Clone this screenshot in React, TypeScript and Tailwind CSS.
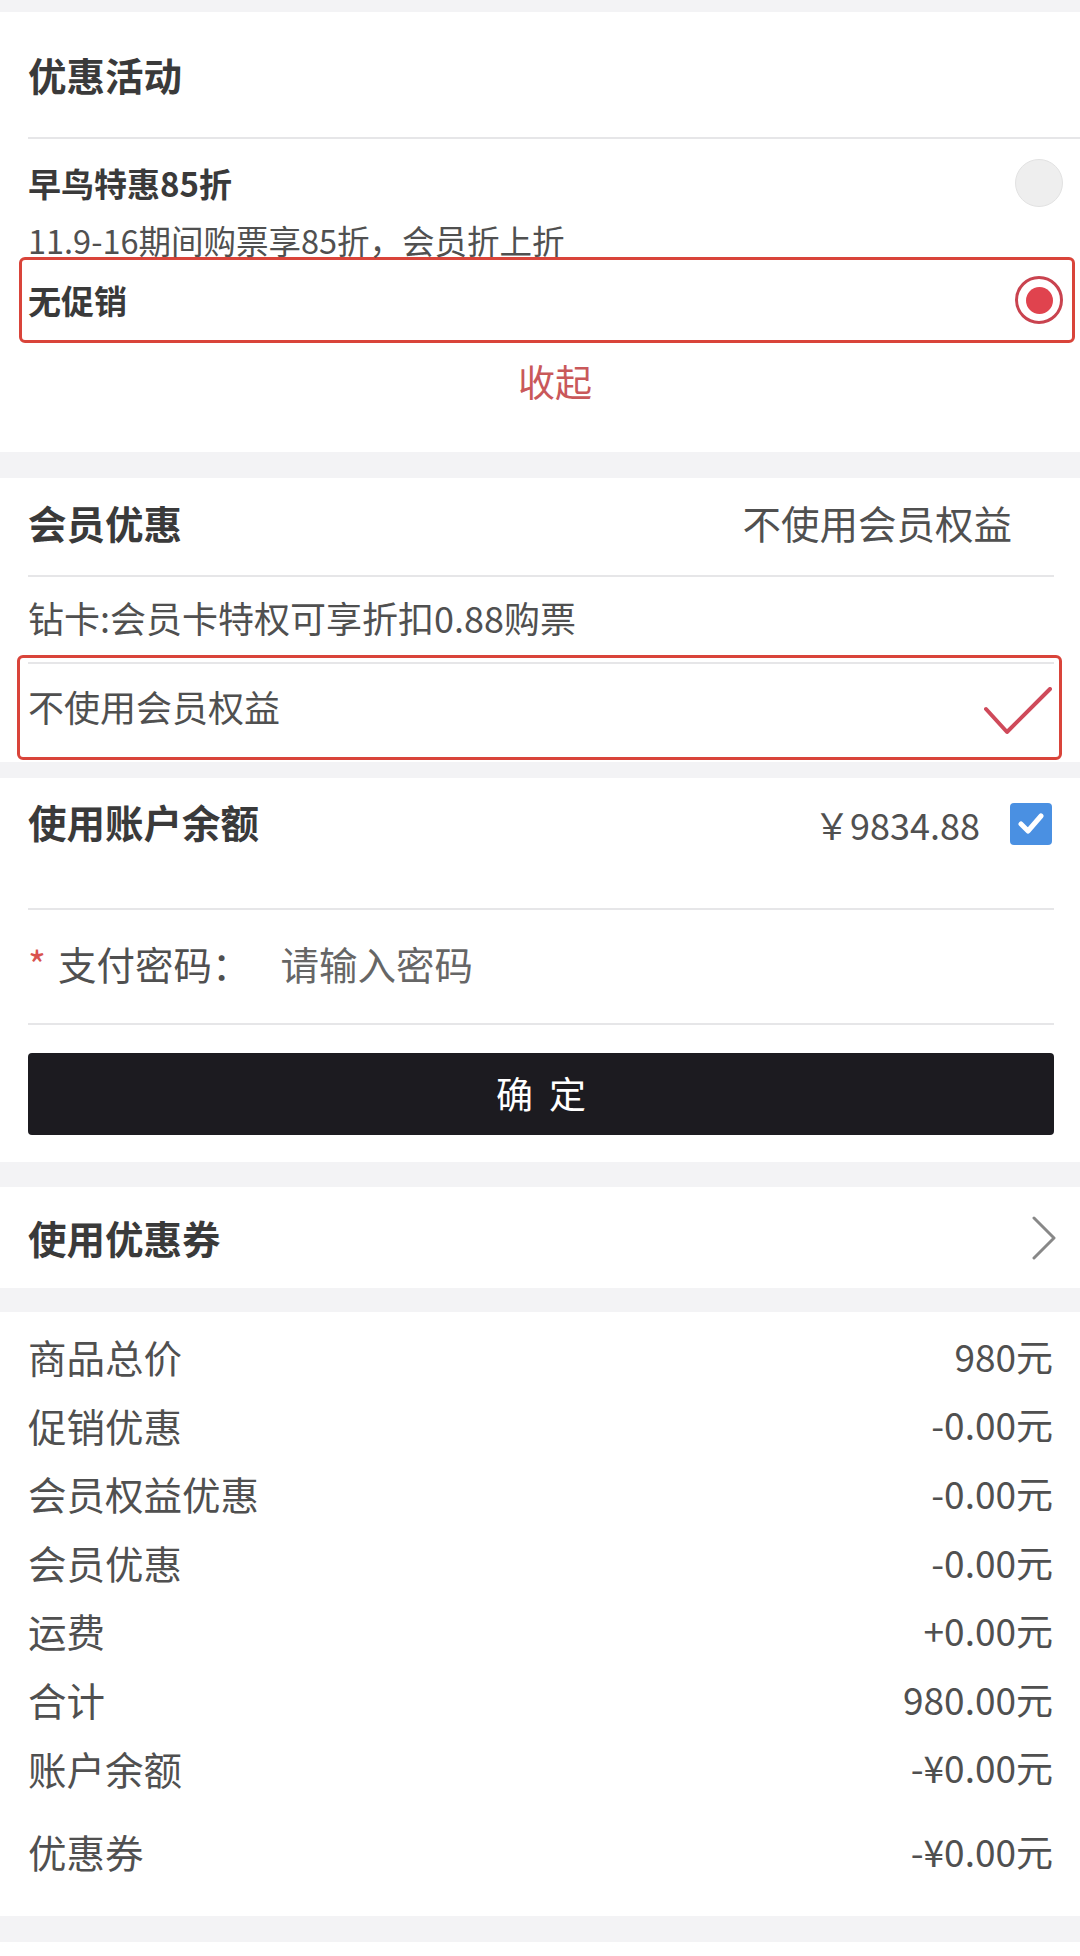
const summary = [
  { label: "商品总价", value: "980元" },
  { label: "促销优惠", value: "-0.00元" },
  { label: "会员权益优惠", value: "-0.00元" },
  { label: "会员优惠", value: "-0.00元" },
  { label: "运费", value: "+0.00元" },
  { label: "合计", value: "980.00元" },
  { label: "账户余额", value: "-¥0.00元" },
];

const Gap = ({ h }: { h: string }) => <div className={`${h} bg-[#f3f3f5]`} />;

const Divider = ({ className = "" }: { className?: string }) => (
  <div className={`h-[2px] bg-[#e6e6e8] ${className}`} />
);

const App = () => {
  return (
    <div className="w-[1080px] min-h-[1956px] bg-white font-['Noto_Sans_CJK_SC','Noto_Sans',sans-serif] text-[#505050]">
      <Gap h="h-[12px]" />

      {/* 优惠活动 */}
      <section className="bg-white pb-[49px]">
        <div className="h-[125px] flex items-center pl-[28px]">
          <h2 className="text-[38.5px] font-bold text-[#3a3a3a] leading-none">优惠活动</h2>
        </div>
        <Divider className="ml-[28px]" />
        <div className="pl-[28px] pr-[17px] mt-[24px]">
          <div className="h-[40px] flex items-center justify-between">
            <span className="text-[33px] font-bold text-[#3a3a3a] leading-none">早鸟特惠85折</span>
            <span className="w-[48px] h-[48px] rounded-full bg-[#eeeeee] border border-[#e2e2e2]" />
          </div>
          <p className="mt-[20px] text-[32.5px] leading-[34px]">11.9-16期间购票享85折，会员折上折</p>
        </div>
        <div className="ml-[19px] mr-[5px] h-[86px] border-[3px] border-[#d9443a] rounded-[6px] flex items-center justify-between pl-[6px] pr-[9px]">
          <span className="text-[33px] font-bold text-[#3a3a3a] leading-none">无促销</span>
          <span className="w-[48px] h-[48px] rounded-full border-[3px] border-[#c9434f] bg-white flex items-center justify-center">
            <span className="w-[27px] h-[27px] rounded-full bg-[#e0434e]" />
          </span>
        </div>
        <div className="mt-[16px] text-center text-[37px] leading-[44px] text-[#c9585a] pl-[30px]">收起</div>
      </section>

      <Gap h="h-[26px]" />

      {/* 会员优惠 */}
      <section className="bg-white pb-[2px]">
        <div className="h-[97px] flex items-center justify-between pl-[28px] pr-[68px] pb-[8px]">
          <h2 className="text-[38.5px] font-bold text-[#3a3a3a] leading-none">会员优惠</h2>
          <span className="text-[38.5px] leading-none">不使用会员权益</span>
        </div>
        <Divider className="ml-[28px] mr-[26px]" />
        <p className="mt-[18px] pl-[28px] text-[36px] leading-[44px]">钻卡:会员卡特权可享折扣0.88购票</p>
        <div className="mt-[16px] ml-[17px] mr-[18px] h-[105px] border-[3px] border-[#d9443a] rounded-[6px] flex flex-col">
          <Divider className="mt-[4px] ml-[8px] mr-[5px]" />
          <div className="flex-1 flex items-center justify-between pl-[8px] pr-[7px] pb-[10px]">
            <span className="text-[36px] leading-none">不使用会员权益</span>
            <svg width="68" height="48" viewBox="0 0 68 48" className="mt-[10px]">
              <polyline
                points="2,22 23,45 66,2"
                fill="none"
                stroke="#cf4a5a"
                strokeWidth="4"
                strokeLinecap="round"
                strokeLinejoin="round"
              />
            </svg>
          </div>
        </div>
      </section>

      <Gap h="h-[16px]" />

      {/* 账户余额 */}
      <section className="bg-white pb-[27px]">
        <div className="h-[86px] flex items-center justify-between pl-[28px] pr-[28px]">
          <h2 className="text-[38.5px] font-bold text-[#3a3a3a] leading-none">使用账户余额</h2>
          <div className="flex items-center gap-[30px] mt-[6px]">
            <span className="text-[36px] leading-none">￥9834.88</span>
            <span className="w-[42px] h-[42px] rounded-[4px] bg-[#4a90e2] flex items-center justify-center">
              <svg width="26" height="22" viewBox="0 0 26 22">
                <polyline
                  points="3,11 10,18 23,3"
                  fill="none"
                  stroke="white"
                  strokeWidth="5"
                  strokeLinecap="round"
                  strokeLinejoin="round"
                />
              </svg>
            </span>
          </div>
        </div>
        <Divider className="mt-[44px] ml-[28px] mr-[26px]" />
        <div className="h-[113px] flex items-center pl-[28px] pb-[6px] text-[38.5px] leading-none">
          <span className="text-[#d9534f] w-[30px]">*</span>
          <span className="text-[#505050]">支付密码：</span>
          <span className="ml-[30px] text-[#666]">请输入密码</span>
        </div>
        <Divider className="ml-[28px] mr-[26px]" />
        <button className="mt-[28px] ml-[28px] w-[1026px] h-[82px] rounded-[4px] bg-[#1c1b20] text-white text-[37px] tracking-[16px] pl-[16px] flex items-center justify-center">
          确定
        </button>
      </section>

      <Gap h="h-[25px]" />

      {/* 使用优惠券 */}
      <section className="bg-white h-[101px] flex items-center justify-between pl-[28px] pr-[23px]">
        <h2 className="text-[38.5px] font-bold text-[#3a3a3a] leading-none">使用优惠券</h2>
        <svg width="26" height="44" viewBox="0 0 26 44">
          <polyline
            points="3,2 23,22 3,42"
            fill="none"
            stroke="#888"
            strokeWidth="3"
            strokeLinecap="round"
            strokeLinejoin="round"
          />
        </svg>
      </section>

      <Gap h="h-[24px]" />

      {/* 金额明细 */}
      <section className="bg-white pt-[10px] pb-[30px] pl-[28px] pr-[27px]">
        {summary.map((row) => (
          <div key={row.label} className="h-[68.6px] flex items-center justify-between leading-none">
            <span className="text-[38.5px]">{row.label}</span>
            <span className="text-[37px]">{row.value}</span>
          </div>
        ))}
        <div className="mt-[15px] h-[69px] flex items-center justify-between leading-none">
          <span className="text-[38.5px]">优惠券</span>
          <span className="text-[37px]">-¥0.00元</span>
        </div>
      </section>

      <Gap h="h-[26px]" />
      <div className="h-[13px] bg-white" />
    </div>
  );
};

export default App;
